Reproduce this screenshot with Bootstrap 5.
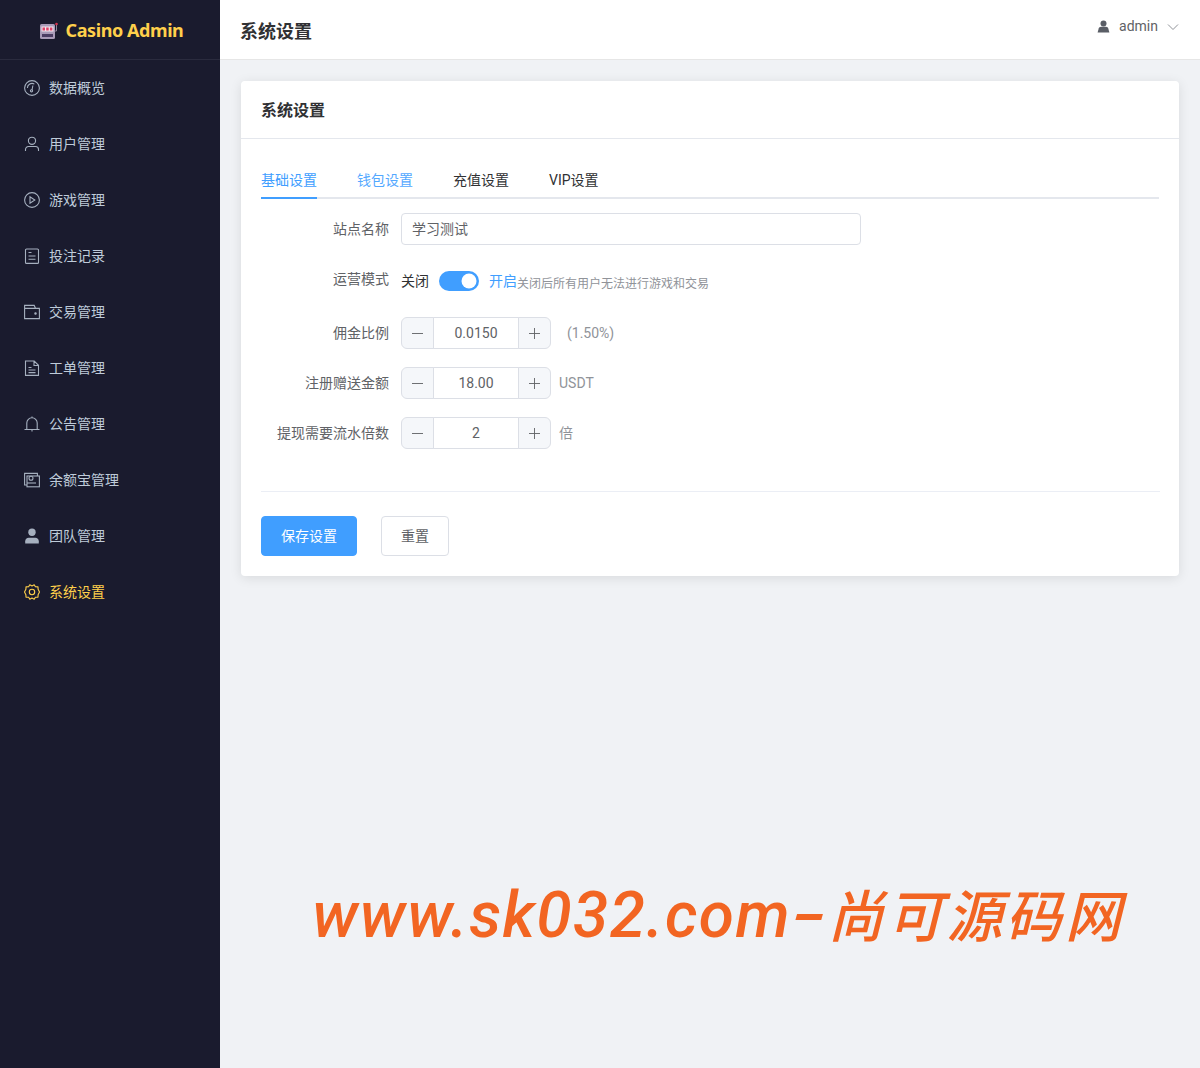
<!DOCTYPE html>
<html lang="zh-CN">
<head>
  <meta charset="utf-8">
  <meta name="viewport" content="width=device-width, initial-scale=1">
  <title>系统设置 - Casino Admin</title>
  <link href="https://cdn.jsdelivr.net/npm/bootstrap@5.3.6/dist/css/bootstrap.min.css" rel="stylesheet">
  <style>
    html, body { height: 100%; }
    body { font-family: "Roboto", "Noto Sans CJK SC", sans-serif; font-size: 14px; color: #606266; background: #f0f2f5; overflow: hidden; }
    .app-shell { height: 1068px; position: relative; }
    .side-bar { width: 220px; background: #1a1b2e; flex-shrink: 0; }
    .side-logo { height: 60px; border-bottom: 1px solid #2a2b3e; gap: 8px; padding: 2px 0 0 2px; color: #ffd04b; font-size: 18px; font-weight: 700; }
    .side-logo span { font-family: "Noto Sans", sans-serif; letter-spacing: -.42px; }
    .side-link { height: 56px; padding: 0 24px; gap: 9px; color: #bfcbd9; font-size: 14px; text-decoration: none; }
    .side-link svg { width: 16px; height: 16px; flex-shrink: 0; fill: none; stroke: currentColor; stroke-width: 1.1; opacity: .85; }
    .side-link.is-active { color: #ffd04b; }
    .side-link.is-active svg { opacity: 1; }
    .top-bar { height: 60px; background: #fff; border-bottom: 1px solid #e6e6e6; padding: 0 21px 0 20px; }
    .top-title { font-size: 18px; font-weight: 700; color: #303133; margin: 4px 0 0 0; }
    .top-user { color: #606266; gap: 5px; margin-top: -6px; }
    .main-area { padding: 21px 21px 0 21px; }
    .set-card { border: 0; border-radius: 4px; box-shadow: 0 2px 12px rgba(0, 0, 0, .1); }
    .set-card .card-header { height: 58px; padding: 2px 20px 0 20px; background: #fff; border-bottom: 1px solid #e4e7ed; display: flex; align-items: center; font-size: 16px; font-weight: 700; color: #303133; }
    .set-card .card-body { padding: 20px; }
    .tab-row { height: 40px; gap: 40px; border-bottom: 2px solid #e4e7ed; margin: 0 0 14px 0; width: 898px; }
    .tab-item { height: 40px; line-height: 43px; color: #303133; text-decoration: none; padding: 0; }
    .tab-item.is-on { color: #409eff; border-bottom: 2px solid #409eff; }
    .tab-item.is-soft { color: #53a8ff; }
    .field-row { display: flex; align-items: center; margin-bottom: 18px; }
    .field-label { width: 128px; margin: 0 12px 0 0; padding: 0; text-align: right; color: #606266; flex-shrink: 0; }
    .name-input { width: 460px; height: 32px; padding: 0 10px 2px 10px; font-size: 14px; color: #606266; border: 1px solid #dcdfe6; border-radius: 4px; }
    .switch-row { height: 36px; align-items: flex-start; margin-bottom: 18px; }
    .switch-row .field-label { line-height: 32px; }
    .switch-off { color: #303133; line-height: 36px; margin-right: 10px; }
    .switch-on { color: #409eff; line-height: 36px; margin-left: 10px; }
    .switch-note { color: #909399; font-size: 12px; line-height: 43px; }
    .form-switch.set-switch { padding: 0; margin: 8px 0 0 0; min-height: 20px; height: 20px; }
    .form-switch.set-switch .form-check-input { width: 40px; height: 20px; margin: 0; float: none; display: block; border: 0; background-color: #409eff; box-shadow: none; }
    .step-group { width: 150px; height: 32px; flex-wrap: nowrap; }
    .step-group .btn { width: 33px; height: 32px; padding: 0; background: #f5f7fa; border: 1px solid #dcdfe6; display: flex; align-items: center; justify-content: center; }
    .step-group .btn svg { width: 11px; height: 11px; stroke: #606266; stroke-width: 1; fill: none; }
    .step-group .form-control { height: 32px; padding: 0; text-align: center; font-size: 14px; color: #606266; border-color: #dcdfe6; }
    .unit-text { margin: 0 0 0 8px; color: #909399; }
    .unit-wide { margin-left: 16px; }
    .foot-line { margin: 42px -1px 24px 0; border: 0; border-top: 1px solid #ebeef5; opacity: 1; }
    .btn-save, .btn-reset { height: 40px; padding: 0 19px; font-size: 14px; border-radius: 4px; }
    .btn-save { background: #409eff; border: 1px solid #409eff; color: #fff; }
    .btn-reset { background: #fff; border: 1px solid #dcdfe6; color: #606266; margin-left: 24px; }
    .water-mark { position: absolute; left: 312px; top: 872px; font-family: "Roboto", "Noto Sans CJK SC", sans-serif; font-size: 64px; line-height: 88px; font-style: italic; font-weight: 500; color: #f26522; white-space: nowrap; letter-spacing: 1.4px; }
    .water-dash { display: inline-block; transform: scaleX(1.6); margin: 0 6px 0 8px; }
    .water-cjk { font-size: 56px; letter-spacing: 3.400px; }
  </style>
</head>
<body>
  <div class="app-shell d-flex">
    <aside class="side-bar">
      <div class="side-logo d-flex align-items-center justify-content-center">
        <svg width="19" height="18" viewBox="0 0 19 18">
          <rect x="1" y="2" width="15" height="15" rx="1.500" fill="#a99bb8"/>
          <rect x="2.500" y="4.500" width="12" height="5" fill="#f3e6ee"/>
          <rect x="3.500" y="5.500" width="2.500" height="3" fill="#e0436a"/>
          <rect x="7.200" y="5.500" width="2.500" height="3" fill="#e0436a"/>
          <rect x="10.900" y="5.500" width="2.500" height="3" fill="#e0436a"/>
          <rect x="3" y="12" width="11" height="3" fill="#4b3d63"/>
          <path d="M16 9h1.500V3" stroke="#8f8398" stroke-width="1" fill="none"/>
          <circle cx="17.500" cy="2" r="1.300" fill="#d8344f"/>
        </svg>
        <span>Casino Admin</span>
      </div>
      <nav class="nav flex-column">
        <a class="nav-link side-link d-flex align-items-center" href="#">
          <svg viewBox="0 0 16 16"><circle cx="8" cy="8" r="7.400"/><path d="M3.400 8a4.600 4.600 0 0 1 7-3.900M8.900 5.500 8 10"/><circle cx="7.500" cy="10.800" r="1.100"/></svg><span>数据概览</span></a>
        <a class="nav-link side-link d-flex align-items-center" href="#">
          <svg viewBox="0 0 16 16"><circle cx="8" cy="4.800" r="3.600"/><path d="M1.500 15v-1.500a3 3 0 0 1 3-3h7a3 3 0 0 1 3 3V15"/></svg><span>用户管理</span></a>
        <a class="nav-link side-link d-flex align-items-center" href="#">
          <svg viewBox="0 0 16 16"><circle cx="8" cy="8" r="7.400"/><path d="M6 4.800v6.400L10.800 8z"/></svg><span>游戏管理</span></a>
        <a class="nav-link side-link d-flex align-items-center" href="#">
          <svg viewBox="0 0 16 16"><rect x="1.500" y="1" width="13" height="14.400" rx="1"/><path d="M4.500 4.500h3M4.500 8h7M4.500 11.200h7"/></svg><span>投注记录</span></a>
        <a class="nav-link side-link d-flex align-items-center" href="#">
          <svg viewBox="0 0 16 16"><path d="M.6 14.600V1.400h9.600l1.400 3h3.800v10.200zM.6 4.400h11"/><circle cx="11.500" cy="9.500" r=".7" fill="currentColor"/></svg><span>交易管理</span></a>
        <a class="nav-link side-link d-flex align-items-center" href="#">
          <svg viewBox="0 0 16 16"><path d="M1.500 1h8.700l4.300 4.300v10.100h-13zM10 1v4.500h4.500M4.500 7.500h3M4.500 10h7M4.500 12.600h7"/></svg><span>工单管理</span></a>
        <a class="nav-link side-link d-flex align-items-center" href="#">
          <svg viewBox="0 0 16 16"><path d="M.5 13.500h15M2.800 13.500V7a5.200 5.200 0 0 1 10.400 0v6.500M8 .4v1.400M8 13.500v2"/></svg><span>公告管理</span></a>
        <a class="nav-link side-link d-flex align-items-center" href="#">
          <svg viewBox="0 0 16 16"><path d="M3 13H.6V1.400h12.800V4"/><rect x="3" y="4" width="12.400" height="10.800"/><circle cx="7" cy="6.200" r="2"/><path d="M3 11h9"/></svg><span>余额宝管理</span></a>
        <a class="nav-link side-link d-flex align-items-center" href="#">
          <svg viewBox="0 0 16 16"><circle cx="8" cy="4.200" r="3.700" fill="currentColor" stroke="none"/><path d="M1.200 15.400v-2.200c0-2 1.600-3.400 3.400-3.400h6.800c1.800 0 3.400 1.400 3.400 3.400v2.200z" fill="currentColor" stroke="none"/></svg><span>团队管理</span></a>
        <a class="nav-link side-link is-active d-flex align-items-center" href="#">
          <svg viewBox="0 0 16 16"><path d="M5.800.8 8 2l2.200-1.200 1.200 2 2.600.1.100 2.400L15.500 8l-1.400 2.700-.1 2.400-2.600.1-1.200 2L8 14l-2.200 1.200-1.200-2-2.600-.1-.1-2.400L.5 8l1.400-2.700.1-2.400 2.600-.1z" stroke-linejoin="round"/><circle cx="8" cy="8" r="2.700"/></svg><span>系统设置</span></a>
      </nav>
    </aside>

    <div class="flex-grow-1 d-flex flex-column">
      <header class="top-bar d-flex align-items-center justify-content-between">
        <h1 class="top-title">系统设置</h1>
        <div class="top-user d-flex align-items-center">
          <svg width="13" height="13" viewBox="0 0 13 13" fill="#5a5e66"><circle cx="6.500" cy="3.400" r="3"/><path d="M.6 12.400l1.200-4.200C2.100 7.300 3 6.900 4 6.800h5c1 .1 1.900.5 2.200 1.400l1.200 4.200z"/></svg>
          <span class="ms-1">admin</span>
          <svg class="ms-1" width="12" height="12" viewBox="0 0 12 12" fill="none" stroke="#909399"><path d="M1 3.500l5 5 5-5"/></svg>
        </div>
      </header>

      <main class="main-area">
        <div class="card set-card">
          <div class="card-header">系统设置</div>
          <div class="card-body">
            <div class="tab-row d-flex">
              <a class="tab-item is-on" href="#">基础设置</a>
              <a class="tab-item is-soft" href="#">钱包设置</a>
              <a class="tab-item" href="#">充值设置</a>
              <a class="tab-item" href="#">VIP设置</a>
            </div>

            <form>
              <div class="field-row">
                <label class="field-label">站点名称</label>
                <input class="form-control name-input" type="text" value="学习测试">
              </div>
              <div class="field-row switch-row">
                <label class="field-label">运营模式</label>
                <span class="switch-off">关闭</span>
                <div class="form-check form-switch set-switch">
                  <input class="form-check-input" type="checkbox" role="switch" checked>
                </div>
                <span class="switch-on">开启</span>
                <span class="switch-note">关闭后所有用户无法进行游戏和交易</span>
              </div>
              <div class="field-row">
                <label class="field-label">佣金比例</label>
                <div class="input-group step-group">
                  <button class="btn" type="button"><svg viewBox="0 0 12 12"><path d="M0 6h12"/></svg></button>
                  <input class="form-control" type="text" value="0.0150">
                  <button class="btn" type="button"><svg viewBox="0 0 12 12"><path d="M0 6h12M6 0v12"/></svg></button>
                </div>
                <span class="unit-text unit-wide">(1.50%)</span>
              </div>
              <div class="field-row">
                <label class="field-label">注册赠送金额</label>
                <div class="input-group step-group">
                  <button class="btn" type="button"><svg viewBox="0 0 12 12"><path d="M0 6h12"/></svg></button>
                  <input class="form-control" type="text" value="18.00">
                  <button class="btn" type="button"><svg viewBox="0 0 12 12"><path d="M0 6h12M6 0v12"/></svg></button>
                </div>
                <span class="unit-text">USDT</span>
              </div>
              <div class="field-row">
                <label class="field-label">提现需要流水倍数</label>
                <div class="input-group step-group">
                  <button class="btn" type="button"><svg viewBox="0 0 12 12"><path d="M0 6h12"/></svg></button>
                  <input class="form-control" type="text" value="2">
                  <button class="btn" type="button"><svg viewBox="0 0 12 12"><path d="M0 6h12M6 0v12"/></svg></button>
                </div>
                <span class="unit-text">倍</span>
              </div>
              <hr class="foot-line">
              <div class="d-flex">
                <button class="btn btn-save" type="button">保存设置</button>
                <button class="btn btn-reset" type="button">重置</button>
              </div>
            </form>
          </div>
        </div>
      </main>
    </div>
    <div class="water-mark">www.sk032.com<span class="water-dash">-</span><span class="water-cjk">尚可源码网</span></div>
  </div>
  <script src="https://cdn.jsdelivr.net/npm/bootstrap@5.3.6/dist/js/bootstrap.bundle.min.js"></script>
</body>
</html>
